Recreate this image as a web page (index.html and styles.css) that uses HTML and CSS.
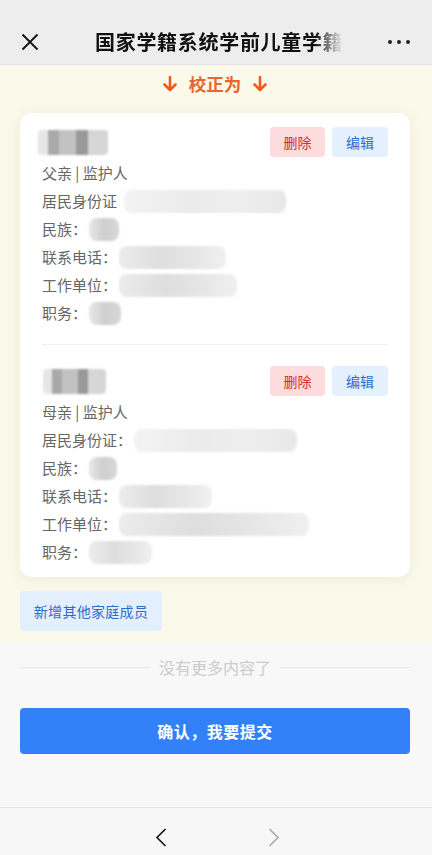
FILE: index.html
```html
<!DOCTYPE html>
<html lang="zh-CN">
<head>
<meta charset="utf-8">
<meta name="viewport" content="width=device-width, initial-scale=1">
<title>国家学籍系统学前儿童学籍</title>
<link rel="stylesheet" href="styles.css">
</head>
<body>
<div class="page">
  <header class="topbar">
    <div class="tb-close">
      <svg width="18" height="18" viewBox="0 0 18 18"><path d="M1.5 1.5 L16.5 16.5 M16.5 1.5 L1.5 16.5" stroke="#111" stroke-width="1.8" fill="none"/></svg>
    </div>
    <div class="tb-title"><span>国家学籍系统学前儿童学籍</span></div>
    <div class="tb-more"><i></i><i></i><i></i></div>
  </header>

  <main class="main">
    <div class="hint">
      <svg class="arrow" width="14" height="16" viewBox="0 0 14 16"><path d="M7 1 V14 M1.5 8.5 L7 14 L12.5 8.5" stroke="#f05a1e" stroke-width="2.6" fill="none" stroke-linecap="round" stroke-linejoin="round"/></svg>
      <span class="hint-text">校正为</span>
      <svg class="arrow" width="14" height="16" viewBox="0 0 14 16"><path d="M7 1 V14 M1.5 8.5 L7 14 L12.5 8.5" stroke="#f05a1e" stroke-width="2.6" fill="none" stroke-linecap="round" stroke-linejoin="round"/></svg>
    </div>

    <section class="card">
      <div class="member">
        <div class="m-head">
          <span class="blur blur-name" style="width:70px"></span>
          <div class="m-actions">
            <button class="btn btn-del">删除</button>
            <button class="btn btn-edit">编辑</button>
          </div>
        </div>
        <div class="m-row">父亲 | 监护人</div>
        <div class="m-row"><span>居民身份证</span><span class="blur blur-light" style="width:162px;margin-left:7px"></span></div>
        <div class="m-row"><span>民族：</span><span class="blur blur-mid" style="width:30px"></span></div>
        <div class="m-row"><span>联系电话：</span><span class="blur blur-soft" style="width:107px"></span></div>
        <div class="m-row"><span>工作单位：</span><span class="blur blur-soft" style="width:118px"></span></div>
        <div class="m-row"><span>职务：</span><span class="blur blur-mid" style="width:32px"></span></div>
      </div>
      <div class="divider"></div>
      <div class="member">
        <div class="m-head">
          <span class="blur blur-name" style="width:63px;margin-left:7px"></span>
          <div class="m-actions">
            <button class="btn btn-del">删除</button>
            <button class="btn btn-edit">编辑</button>
          </div>
        </div>
        <div class="m-row">母亲 | 监护人</div>
        <div class="m-row"><span>居民身份证：</span><span class="blur blur-light" style="width:163px"></span></div>
        <div class="m-row"><span>民族：</span><span class="blur blur-mid" style="width:28px"></span></div>
        <div class="m-row"><span>联系电话：</span><span class="blur blur-soft" style="width:93px"></span></div>
        <div class="m-row"><span>工作单位：</span><span class="blur blur-soft" style="width:190px"></span></div>
        <div class="m-row"><span>职务：</span><span class="blur blur-soft" style="width:63px"></span></div>
      </div>
    </section>

    <button class="btn-add">新增其他家庭成员</button>
  </main>

  <section class="footer-area">
    <div class="nomore"><span class="nm-line"></span><span class="nm-text">没有更多内容了</span><span class="nm-line"></span></div>
    <button class="btn-submit">确认，我要提交</button>
  </section>

  <nav class="bottombar">
    <svg width="12" height="19" viewBox="0 0 12 19"><path d="M10.5 1 L2 9.5 L10.5 18" stroke="#111" stroke-width="1.6" fill="none"/></svg>
    <svg width="12" height="19" viewBox="0 0 12 19"><path d="M1.5 1 L10 9.5 L1.5 18" stroke="#aaa" stroke-width="1.6" fill="none"/></svg>
  </nav>
</div>
</body>
</html>
```

FILE: styles.css
```css
* { box-sizing: border-box; }
html, body { margin: 0; padding: 0; }
body {
  font-family: "Noto Sans CJK SC", "Noto Sans", sans-serif;
  background: #f8f8f8;
  width: 432px;
  height: 855px;
  overflow: hidden;
}
.page { display: flex; flex-direction: column; height: 855px; }

.topbar {
  height: 65px;
  padding-top: 20px;
  background: #ededed;
  border-bottom: 1px solid #e2e2e2;
  display: flex;
  align-items: center;
}
.tb-close { width: 95px; padding-left: 21px; display: flex; align-items: center; }
.tb-title {
  width: 250px;
  overflow: hidden;
  white-space: nowrap;
  font-size: 20px;
  letter-spacing: 0.7px;
  font-weight: 700;
  color: #111;
  -webkit-mask-image: linear-gradient(to right, #000 88%, transparent 99%);
  mask-image: linear-gradient(to right, #000 88%, transparent 99%);
  line-height: 28px;
}
.tb-more { flex: 1; display: flex; justify-content: flex-end; gap: 5px; padding-right: 22px; }
.tb-more i { width: 4px; height: 4px; border-radius: 50%; background: #222; display: block; }

.main {
  background: #fbf9ea;
  padding: 0 22px 11px 20px;
}
.hint {
  height: 36px;
  display: flex;
  align-items: center;
  justify-content: center;
  gap: 12px;
  padding-top: 2px;
}
.hint-text { font-size: 17.5px; font-weight: 700; color: #e8652e; line-height: 22px; }
.arrow { display: block; }

.card {
  margin-top: 12px;
  background: #fff;
  border-radius: 12px;
  box-shadow: 0 2px 14px rgba(120, 110, 60, 0.10);
  padding: 14px 22px 11px;
}
.m-head { display: flex; justify-content: space-between; align-items: center; height: 30px; margin-left: -6px; }
.m-actions { display: flex; gap: 7px; }
.btn {
  border: 0;
  border-radius: 4px;
  height: 30px;
  width: 56px;
  font-family: inherit;
  font-size: 14px;
  padding: 0;
}
.btn-del { background: #fcdcdc; color: #d82c2c; width: 55px; }
.btn-edit { background: #e4f0fd; color: #2d6ed0; }
.m-row {
  height: 28px;
  line-height: 28px;
  font-size: 15px;
  color: #666;
  display: flex;
  align-items: center;
  white-space: nowrap;
}
.m-head + .m-row { margin-top: 2px; }
.divider { height: 1px; background: #efefef; margin: 17px 0 21px; }

.blur {
  display: inline-block;
  height: 23px;
  border-radius: 8px;
  filter: blur(0.8px);
  margin-left: 2px;
}
.blur-name {
  height: 25px;
  border-radius: 4px;
  background: linear-gradient(to right, #e6e6e6 0 15%, #a9a9a9 15% 30%, #c2c2c2 30% 55%, #999 55% 72%, #d6d6d6 72% 100%);
}
.blur-light { background: linear-gradient(to right, #f3f3f3, #ebebeb 40%, #eeeeee 70%, #e8e8e8); }
.blur-mid { background: linear-gradient(to right, #e8e8e8, #cfcfcf 50%, #d8d8d8); }
.blur-soft { background: linear-gradient(to right, #ececec, #dedede 40%, #e6e6e6 70%, #f0f0f0); }

.btn-add {
  margin-top: 14px;
  height: 40px;
  width: 142px;
  border: 0;
  border-radius: 4px;
  background: #e3effc;
  color: #2e6cc9;
  font-family: inherit;
  font-size: 14px;
  padding: 0;
  letter-spacing: 0.3px;
}

.footer-area { flex: 1; padding: 12px 22px 0 20px; }
.nomore { display: flex; align-items: center; gap: 9px; height: 26px; }
.nm-line { flex: 1; height: 1px; background: #e6e6e6; }
.nm-text { font-size: 16px; color: #cbcbcb; }
.btn-submit {
  margin-top: 28px;
  width: 100%;
  height: 46px;
  border: 0;
  border-radius: 4px;
  background: #3381f8;
  color: #fff;
  font-family: inherit;
  font-size: 16px;
  font-weight: 700;
  letter-spacing: 0.5px;
}

.bottombar {
  height: 48px;
  border-top: 1px solid #e4e4e4;
  background: #f7f7f7;
  display: flex;
  justify-content: center;
  gap: 101px;
  padding-top: 20px;
  padding-left: 2px;
}
.bottombar svg { display: block; }
```
